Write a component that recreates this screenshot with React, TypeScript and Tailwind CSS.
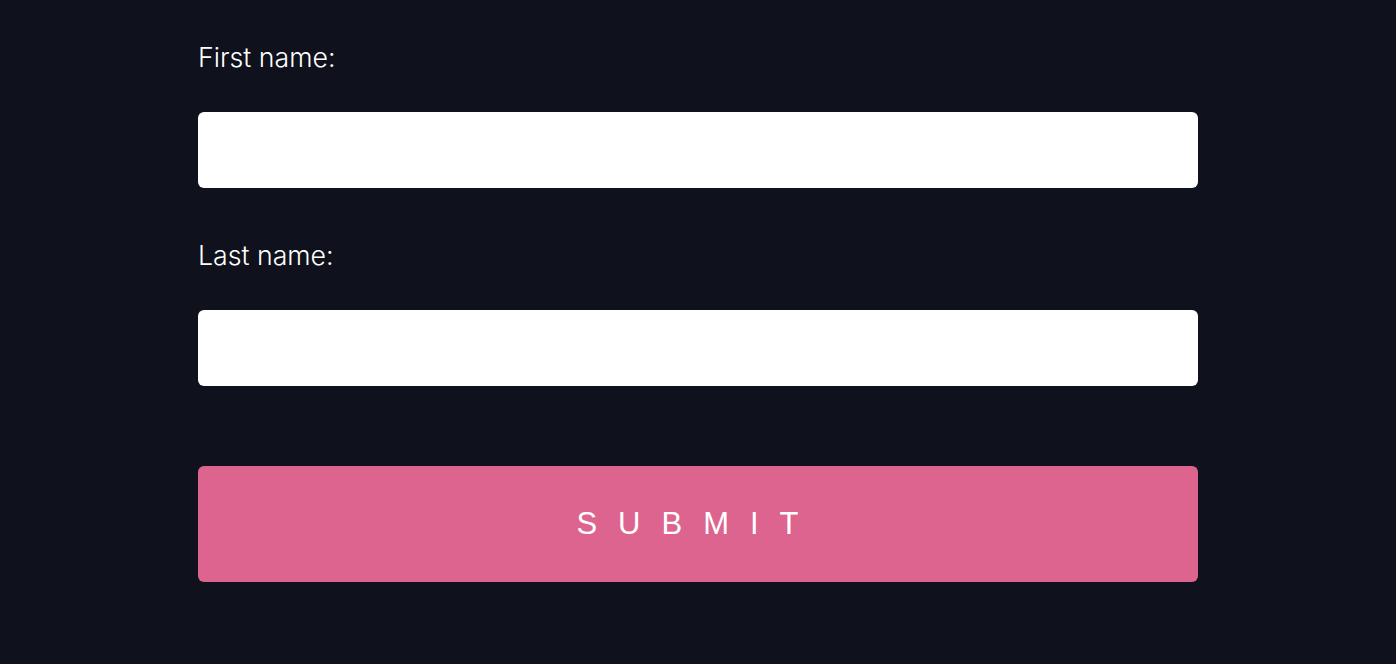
import React from 'react';

const App: React.FC = () => {
  return (
    <div className="min-h-[664px] w-full bg-[#0f111c] font-['Inter',sans-serif]">
      <form className="mx-auto flex w-[1000px] flex-col pt-[41px]">
        <label className="text-[26.7px] leading-[32px] font-light text-white">First name:</label>
        <input type="text" className="mt-[39px] h-[76px] w-full rounded-md bg-white px-4 outline-none" />
        <label className="mt-[51px] text-[26.7px] leading-[32px] font-light text-white">Last name:</label>
        <input type="text" className="mt-[39px] h-[76px] w-full rounded-md bg-white px-4 outline-none" />
        <button
          type="button"
          className="mt-[80px] h-[116px] w-full rounded-md bg-[#dd648e] font-['Liberation_Sans',sans-serif] text-[31px] tracking-[21px] text-white"
        >
          SUBMIT
        </button>
      </form>
    </div>
  );
};

export default App;
